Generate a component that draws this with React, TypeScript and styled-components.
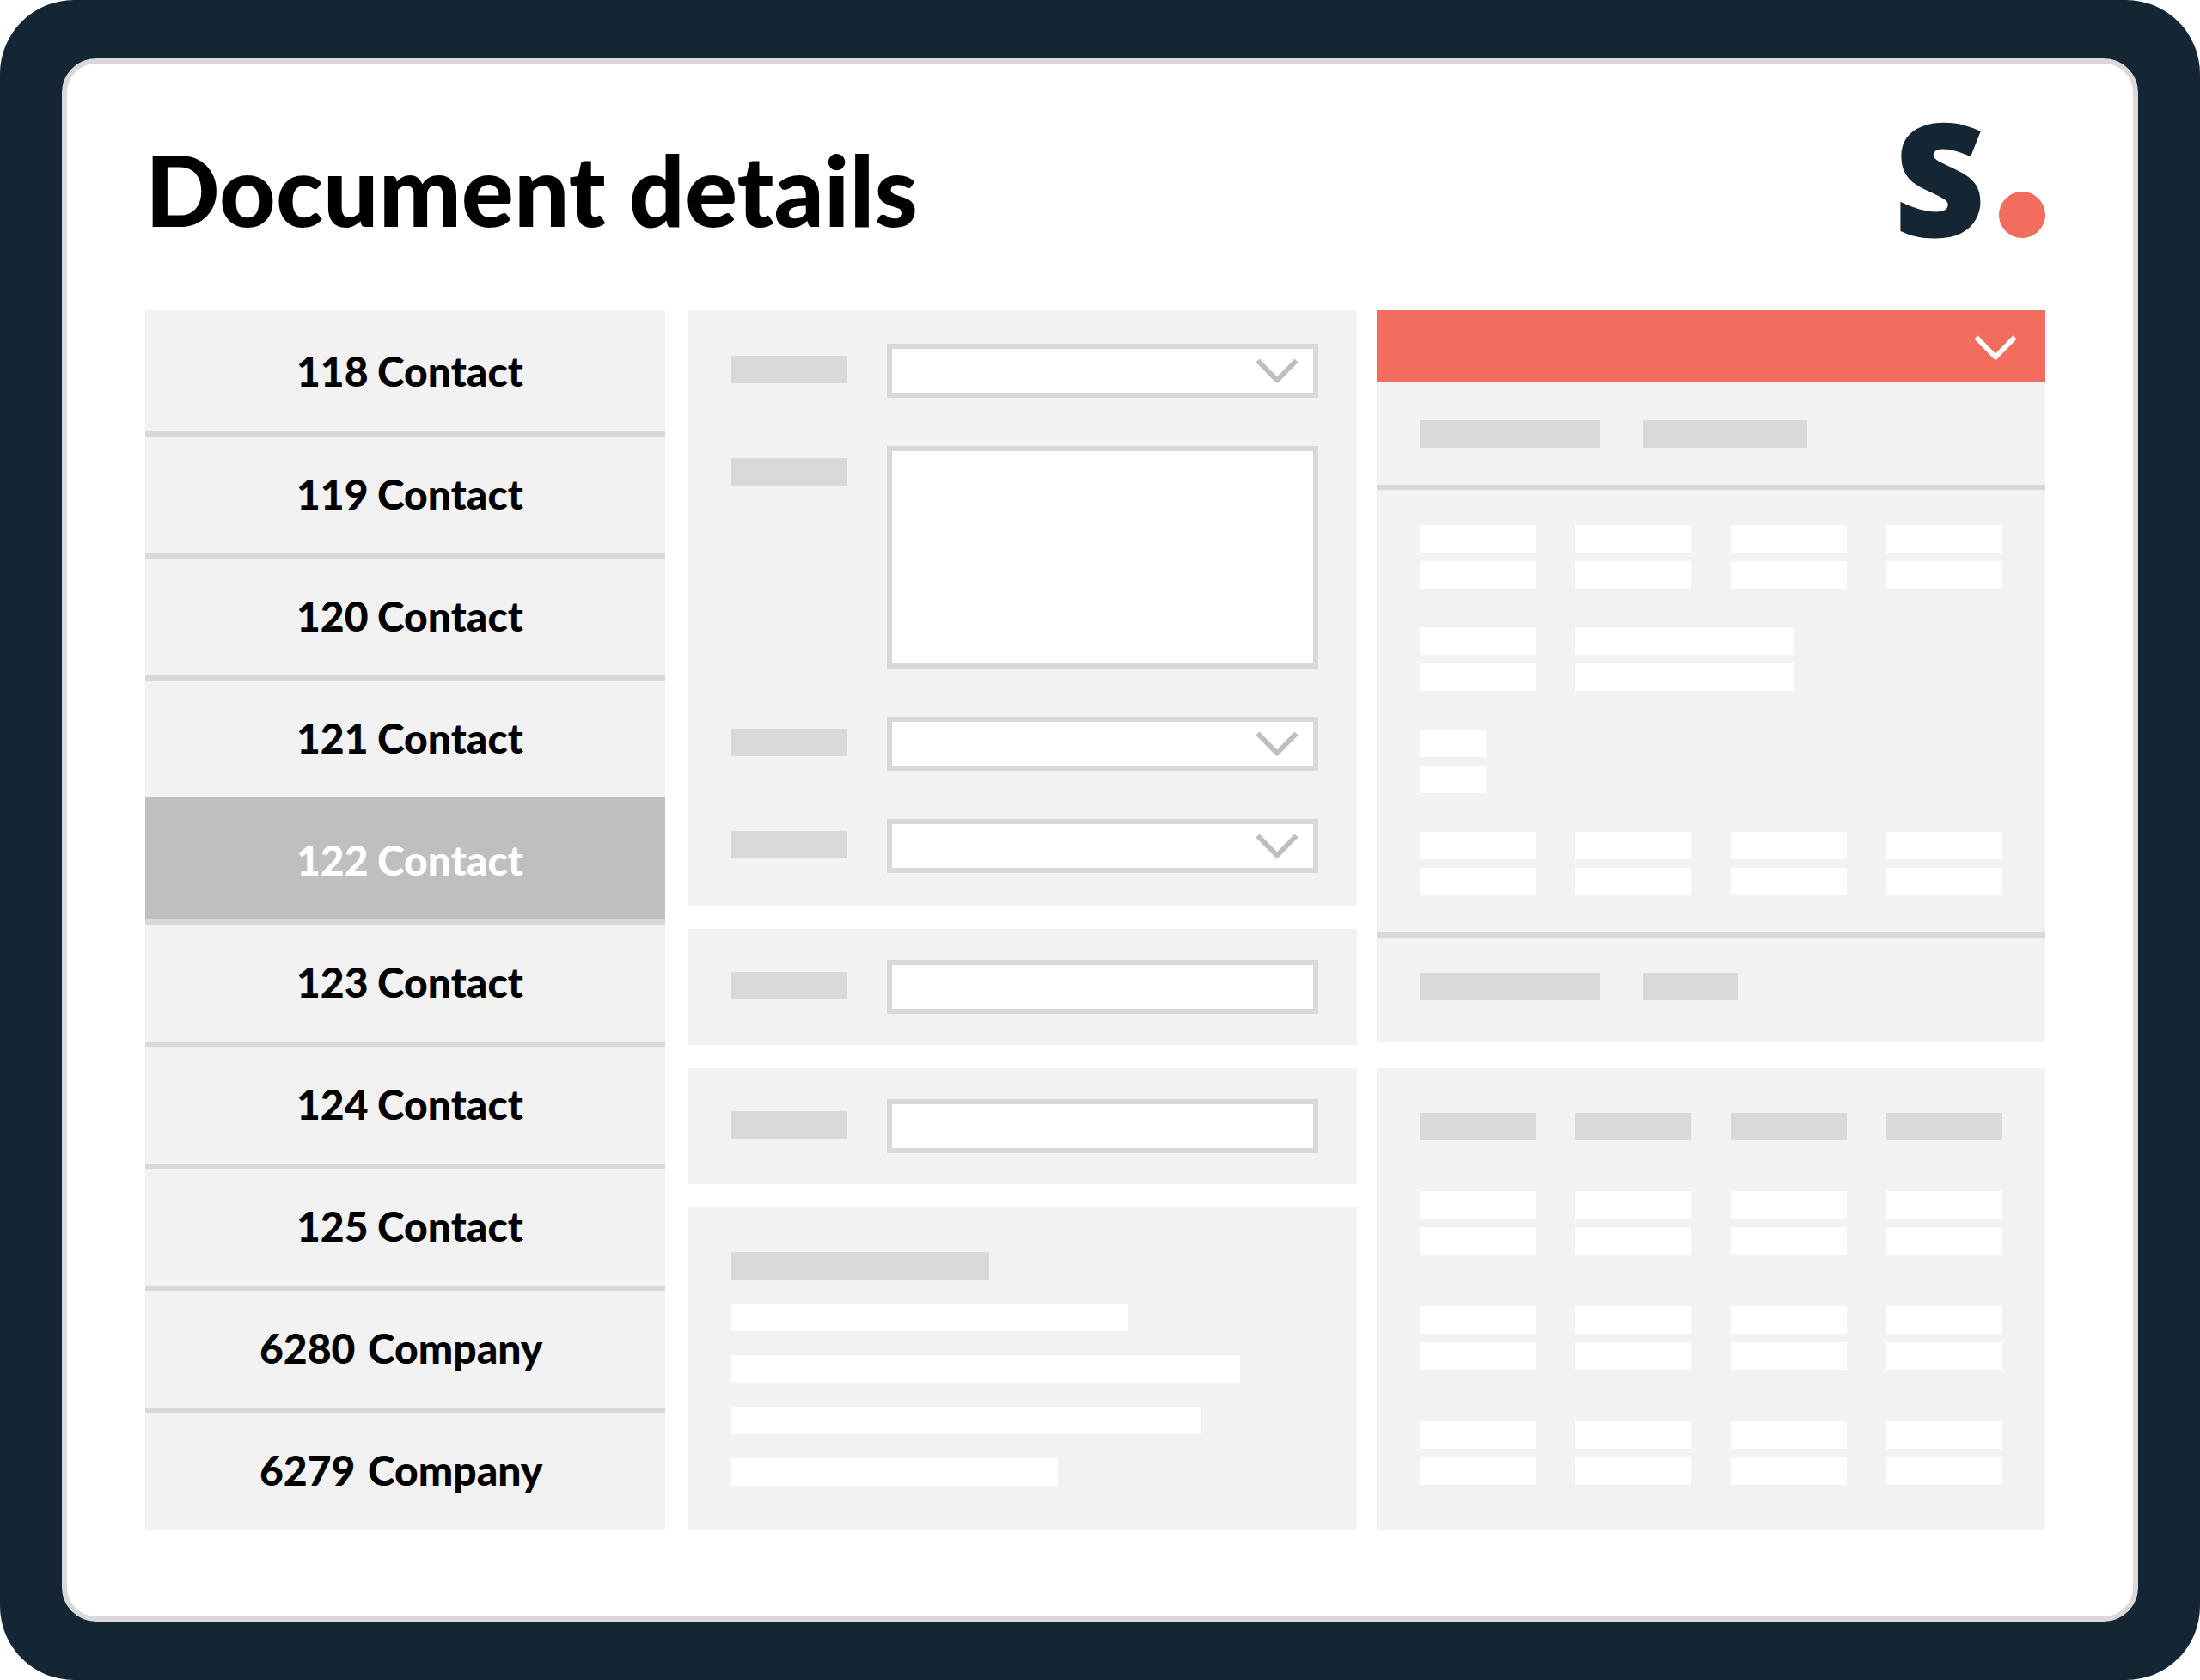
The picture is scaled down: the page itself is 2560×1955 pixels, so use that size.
import React from "react";
import styled, { createGlobalStyle } from "styled-components";

const navy = "#142633";
const coral = "#f26d5e";
const panelGrey = "#f2f2f2";
const barGrey = "#d9d9d9";
const activeGrey = "#bfbfbf";

const GlobalStyle = createGlobalStyle`
  * { box-sizing: border-box; }
  body {
    margin: 0;
    background: #ffffff;
    color: #000000;
    font-family: Lato, "Open Sans", sans-serif;
  }
`;

const Frame = styled.div`
  min-height: 100vh;
  display: flex;
  padding: 68px 72px;
  border-radius: 86px;
  background: ${navy};
`;

const Screen = styled.main`
  flex: 1;
  min-width: 0;
  padding: 68px 102px 100px 91px;
  border: 6px solid ${barGrey};
  border-radius: 40px;
  background: #ffffff;
`;

const Header = styled.header`
  display: flex;
  justify-content: space-between;
  align-items: flex-end;
  margin-bottom: 84px;
`;

const Title = styled.h1`
  margin: 0;
  font-size: 114px;
  line-height: 114px;
  font-weight: 900;
`;

const LogoMark = styled.svg`
  display: block;
  width: 170px;
  height: 135px;
  overflow: visible;
`;

const LogoLetter = styled.text`
  fill: ${navy};
  stroke: ${navy};
  stroke-width: 3;
  font-family: "Open Sans", sans-serif;
  font-size: 180px;
  font-weight: 800;
`;

const Columns = styled.div`
  display: grid;
  grid-template-columns: 605fr 1579fr;
  gap: 27px;
`;

const Workspace = styled.div`
  display: grid;
  grid-template-columns: 1fr 1fr;
  gap: 23px;
`;

const RecordList = styled.nav`
  display: flex;
  flex-direction: column;
  background: ${panelGrey};
`;

const RecordButton = styled.button<{ $active: boolean; $company: boolean }>`
  display: flex;
  align-items: center;
  flex: none;
  height: 142px;
  padding: 0 0 3px ${(p) => (p.$company ? 133 : 176)}px;
  border: 0;
  border-bottom: 6px solid ${barGrey};
  background: ${(p) => (p.$active ? activeGrey : "transparent")};
  background-clip: padding-box;
  box-shadow: ${(p) => (p.$active ? `0 -7px 0 ${activeGrey}` : "none")};
  color: ${(p) => (p.$active ? "#ffffff" : "#000000")};
  font: 900 48px/56px Lato, "Open Sans", sans-serif;
  text-align: left;
  cursor: pointer;

  &:first-child {
    height: 147px;
    padding-bottom: 0;
  }
  &:last-child {
    flex: 1 0 136px;
    border-bottom: 0;
  }
`;

const RecordNumber = styled.span<{ $company: boolean }>`
  flex: none;
  width: ${(p) => (p.$company ? 126 : 94)}px;
`;

const Column = styled.div<{ $gap: number }>`
  display: flex;
  flex-direction: column;
  gap: ${(p) => p.$gap}px;
`;

const FormPanel = styled.form<{ $top: number; $bottom: number }>`
  display: grid;
  gap: 56px;
  padding: ${(p) => p.$top}px 45px ${(p) => p.$bottom}px 50px;
  background: ${panelGrey};
`;

const Field = styled.div`
  display: grid;
  grid-template-columns: 135px 1fr;
  column-gap: 46px;
  align-items: start;
`;

const FieldLabel = styled.label`
  height: 32px;
  margin-top: 14px;
  background: ${barGrey};
`;

const controlLook = `
  display: block;
  width: 100%;
  margin: 0;
  padding: 0 20px;
  border: 6px solid ${barGrey};
  border-radius: 0;
  background: #ffffff;
  font: 400 28px/36px Lato, sans-serif;
`;

const SelectBox = styled.div`
  display: grid;
  align-items: center;

  & > * { grid-area: 1 / 1; }
`;

const Select = styled.select`
  ${controlLook}
  height: 63px;
  appearance: none;
`;

const TextInput = styled.input`
  ${controlLook}
  height: 63px;
`;

const TextArea = styled.textarea`
  ${controlLook}
  height: 259px;
  resize: none;
`;

const ChevronIcon = styled.svg<{ $color: string }>`
  width: 50px;
  height: 30px;
  fill: none;
  stroke: ${(p) => p.$color};
  stroke-width: 6;
  stroke-linejoin: round;
  pointer-events: none;
`;

const SelectChevron = styled(ChevronIcon)`
  justify-self: end;
  margin-right: 23px;
`;

const NotesPanel = styled.section`
  flex: 1;
  display: flex;
  flex-direction: column;
  gap: 28px;
  padding: 52px 50px;
  background: ${panelGrey};
`;

const Bar = styled.div<{ $tone?: "grey" | "white"; $width?: number }>`
  width: ${(p) => (p.$width ? `${p.$width}px` : "100%")};
  max-width: 100%;
  height: 32px;
  background: ${(p) => (p.$tone === "grey" ? barGrey : "#ffffff")};
`;

const DetailCard = styled.section`
  background: ${panelGrey};
`;

const CardToggle = styled.button`
  display: flex;
  justify-content: flex-end;
  align-items: center;
  width: 100%;
  height: 84px;
  padding: 4px 33px 0 0;
  border: 0;
  background: ${coral};
  cursor: pointer;
`;

const CardHead = styled.div`
  display: flex;
  gap: 50px;
  padding: 44px 50px 43px;
  border-bottom: 6px solid ${barGrey};
`;

const CardBody = styled.div`
  display: grid;
  gap: 45px;
  padding: 41px 50px 43px;
  border-bottom: 6px solid ${barGrey};
`;

const CardFoot = styled.div`
  display: flex;
  gap: 50px;
  padding: 41px 50px 49px;
`;

const ValueRow = styled.div`
  display: grid;
  grid-template-columns: repeat(4, 1fr);
  gap: 46px;
`;

const ValuePair = styled.div<{ $wide: boolean }>`
  grid-column: ${(p) => (p.$wide ? "span 2" : "auto")};
  display: grid;
  gap: 10px;
`;

const DataTable = styled.table`
  flex: 1;
  display: flex;
  flex-direction: column;
  gap: 59px;
  padding: 52px 50px;
  background: ${panelGrey};
`;

const TableHead = styled.thead`
  display: block;
`;

const TableBody = styled.tbody`
  display: grid;
  gap: 60px;
`;

const TableRow = styled.tr`
  display: grid;
  grid-template-columns: repeat(4, 1fr);
  gap: 46px;
`;

const HeadCell = styled.th`
  padding: 0;
`;

const Cell = styled.td`
  display: grid;
  gap: 10px;
  padding: 0;
`;

type RecordItem = { id: string; kind: "Contact" | "Company" };

const records: RecordItem[] = [
  { id: "118", kind: "Contact" },
  { id: "119", kind: "Contact" },
  { id: "120", kind: "Contact" },
  { id: "121", kind: "Contact" },
  { id: "122", kind: "Contact" },
  { id: "123", kind: "Contact" },
  { id: "124", kind: "Contact" },
  { id: "125", kind: "Contact" },
  { id: "6280", kind: "Company" },
  { id: "6279", kind: "Company" },
];

const noteWidths = [462, 592, 547, 380];

// Each row lists the widths of its value pairs; 0 fills the grid cell.
const detailRows = [[0, 0, 0, 0], [0, 254], [77], [0, 0, 0, 0]];

const columns = [0, 1, 2, 3];

function Logo() {
  return (
    <LogoMark viewBox="0 0 170 135" role="img" aria-label="S.">
      <LogoLetter x="-5" y="132">S</LogoLetter>
      <circle cx="143" cy="108" r="27" fill={coral} />
    </LogoMark>
  );
}

function SelectField({ id, name }: { id: string; name: string }) {
  return (
    <Field>
      <FieldLabel htmlFor={id} />
      <SelectBox>
        <Select id={id} aria-label={name} />
        <SelectChevron $color={activeGrey} viewBox="0 0 50 30" aria-hidden="true">
          <path d="M2.5 2.5 25 25.5 47.5 2.5" />
        </SelectChevron>
      </SelectBox>
    </Field>
  );
}

function InputField({ id, name }: { id: string; name: string }) {
  return (
    <Field>
      <FieldLabel htmlFor={id} />
      <TextInput id={id} type="text" aria-label={name} />
    </Field>
  );
}

export default function App() {
  const [active, setActive] = React.useState("122");
  const [open, setOpen] = React.useState(true);

  return (
    <>
      <GlobalStyle />
      <Frame>
        <Screen>
          <Header>
            <Title>Document details</Title>
            <Logo />
          </Header>
          <Columns>
            <RecordList aria-label="Records">
              {records.map((r) => (
                <RecordButton
                  key={r.id}
                  type="button"
                  $active={r.id === active}
                  $company={r.kind === "Company"}
                  onClick={() => setActive(r.id)}
                >
                  <RecordNumber $company={r.kind === "Company"}>{r.id}</RecordNumber>
                  <span>{r.kind}</span>
                </RecordButton>
              ))}
            </RecordList>
            <Workspace>
              <Column $gap={27}>
                <FormPanel $top={39} $bottom={38}>
                  <SelectField id="type" name="Type" />
                  <Field>
                    <FieldLabel htmlFor="description" />
                    <TextArea id="description" aria-label="Description" />
                  </Field>
                  <SelectField id="status" name="Status" />
                  <SelectField id="owner" name="Owner" />
                </FormPanel>
                <FormPanel $top={36} $bottom={36}>
                  <InputField id="reference" name="Reference" />
                </FormPanel>
                <FormPanel $top={36} $bottom={36}>
                  <InputField id="subject" name="Subject" />
                </FormPanel>
                <NotesPanel>
                  <Bar $tone="grey" $width={300} />
                  {noteWidths.map((w) => (
                    <Bar key={w} $width={w} />
                  ))}
                </NotesPanel>
              </Column>
              <Column $gap={30}>
                <DetailCard>
                  <CardToggle
                    type="button"
                    aria-label="Toggle details"
                    aria-expanded={open}
                    onClick={() => setOpen(!open)}
                  >
                    <ChevronIcon $color="#ffffff" viewBox="0 0 50 30" aria-hidden="true">
                      <path d="M2.5 2.5 25 25.5 47.5 2.5" />
                    </ChevronIcon>
                  </CardToggle>
                  {open && (
                    <>
                      <CardHead>
                        <Bar $tone="grey" $width={210} />
                        <Bar $tone="grey" $width={191} />
                      </CardHead>
                      <CardBody>
                        {detailRows.map((row, i) => (
                          <ValueRow key={i}>
                            {row.map((w, j) => (
                              <ValuePair key={j} $wide={w > 200}>
                                <Bar $width={w} />
                                <Bar $width={w} />
                              </ValuePair>
                            ))}
                          </ValueRow>
                        ))}
                      </CardBody>
                      <CardFoot>
                        <Bar $tone="grey" $width={210} />
                        <Bar $tone="grey" $width={110} />
                      </CardFoot>
                    </>
                  )}
                </DetailCard>
                <DataTable aria-label="Entries">
                  <TableHead>
                    <TableRow>
                      {columns.map((c) => (
                        <HeadCell key={c} scope="col">
                          <Bar $tone="grey" />
                        </HeadCell>
                      ))}
                    </TableRow>
                  </TableHead>
                  <TableBody>
                    {[0, 1, 2].map((r) => (
                      <TableRow key={r}>
                        {columns.map((c) => (
                          <Cell key={c}>
                            <Bar />
                            <Bar />
                          </Cell>
                        ))}
                      </TableRow>
                    ))}
                  </TableBody>
                </DataTable>
              </Column>
            </Workspace>
          </Columns>
        </Screen>
      </Frame>
    </>
  );
}
